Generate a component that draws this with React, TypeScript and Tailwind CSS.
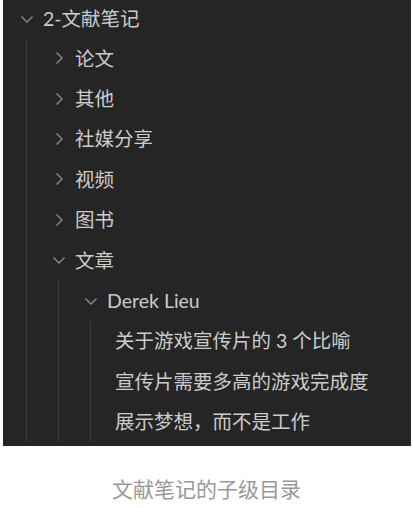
type Node = {
    label: string
    open?: boolean
    leaf?: boolean
    children?: Node[]
}

const tree: Node = {
    label: "2-文献笔记",
    open: true,
    children: [
        { label: "论文" },
        { label: "其他" },
        { label: "社媒分享" },
        { label: "视频" },
        { label: "图书" },
        {
            label: "文章",
            open: true,
            children: [
                {
                    label: "Derek Lieu",
                    open: true,
                    children: [
                        { label: "关于游戏宣传片的 3 个比喻", leaf: true },
                        { label: "宣传片需要多高的游戏完成度", leaf: true },
                        { label: "展示梦想，而不是工作", leaf: true },
                    ],
                },
            ],
        },
    ],
}

const Chevron = ({ open }: { open: boolean }) => (
    <svg width="14" height="14" viewBox="0 0 14 14" className="-ml-[6px] shrink-0">
        {open ? (
            <polyline points="1.5,4.5 7,10 12.5,4.5" fill="none" stroke="#8a8a8a" strokeWidth="1.4" />
        ) : (
            <polyline points="4.5,1.5 10,7 4.5,12.5" fill="none" stroke="#8a8a8a" strokeWidth="1.4" />
        )}
    </svg>
)

const Row = ({ node, level, first }: { node: Node; level: number; first?: boolean }) => {
    const guides = Array.from({ length: level })

    return (
        <div className={`flex items-stretch pl-[23px] ${first ? "h-[38px]" : "h-[40.4px]"}`}>
            {guides.map((_, i) => (
                <div key={i} className="w-[32px] shrink-0 border-l border-[#3e3e3e]" />
            ))}
            <div className={`flex items-center ${node.leaf ? "-ml-[7px]" : ""}`}>
                {!node.leaf && <Chevron open={!!node.open} />}
                <span className={`${node.leaf ? "" : "ml-[9px]"} text-[#cccccc] whitespace-nowrap`}>
                    {node.label}
                </span>
            </div>
        </div>
    )
}

const renderTree = (node: Node, level: number, out: JSX.Element[]) => {
    out.push(<Row key={out.length} node={node} level={level} first={out.length === 0} />)
    if (node.open && node.children) {
        node.children.forEach((c) => renderTree(c, level + 1, out))
    }
    return out
}

export default function App() {
    const rows = renderTree(tree, 0, [])

    return (
        <div className="w-[413px] h-[508px] bg-white" style={{ fontFamily: 'Lato, "Noto Sans CJK SC", sans-serif' }}>
            <div className="ml-[3px] w-[408px] h-[446px] bg-[#252525] text-[19.5px] overflow-hidden">
                {rows}
            </div>
            <p className="mt-[27px] text-center text-[21px] text-[#999999]">文献笔记的子级目录</p>
        </div>
    )
}
